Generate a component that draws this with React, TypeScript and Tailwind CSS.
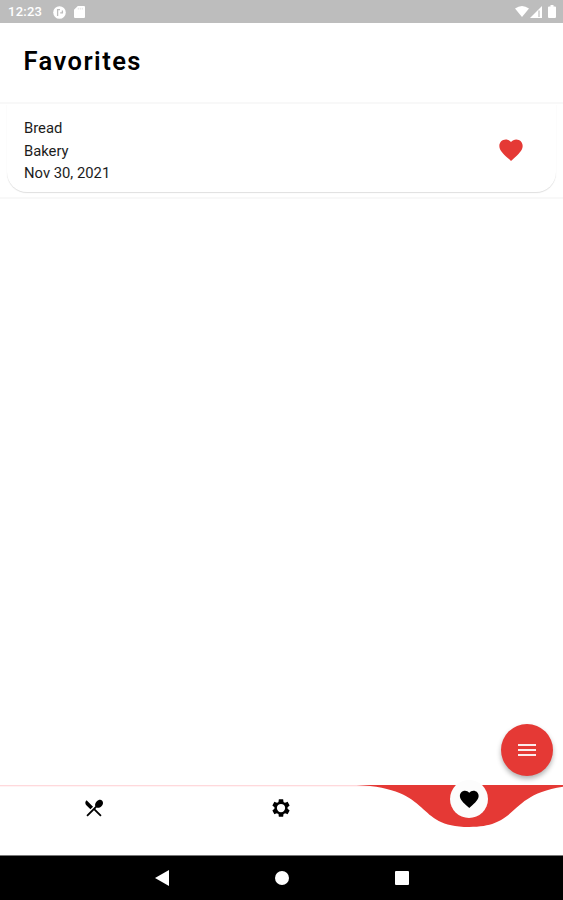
import { MdFavorite, MdMenu, MdRestaurantMenu } from "react-icons/md"

function StatusBar() {
  return (
    <div className="flex h-[23px] shrink-0 items-center justify-between bg-[#bdbdbd] pl-2 pr-[7px] text-white">
      <div className="flex items-center">
        <span className="w-[45px] text-[13px] leading-[23px] font-medium tracking-[0.25px]">12:23</span>
        <svg className="mt-px h-[13px] w-[13px]" viewBox="0 0 13 13">
          <circle cx="6.5" cy="6.5" r="6.3" fill="#fff" />
          <path d="M4.6 10V3.6H7M7.2 6.8H9.4V4.6" fill="none" stroke="#bdbdbd" strokeWidth="1.3" />
        </svg>
        <svg className="mt-px ml-[8px] h-3 w-[11px]" viewBox="0 0 11 12">
          <path d="M3.8 0H10Q11 0 11 1V11Q11 12 10 12H1Q0 12 0 11V3.8Z" fill="#fff" />
          <path d="M4.3 1.8V3.6M6.3 1.8V3.6M8.3 1.8V3.6" stroke="#dedede" strokeWidth="0.8" />
        </svg>
      </div>
      <div className="flex items-center">
        <svg className="h-[11px] w-[14px]" viewBox="0 0 14 11">
          <path d="M0 2.6Q7-2.6 14 2.6L7 11Z" fill="#fff" />
        </svg>
        <svg className="ml-px h-3 w-[12px]" viewBox="0 0 12 12">
          <path d="M0 12L12 0V12Z" fill="#fff" />
          <path d="M9 4.5V11" stroke="#bdbdbd" strokeWidth="1.2" />
        </svg>
        <svg className="ml-[6px] h-[13px] w-2" viewBox="0 0 8 13">
          <path d="M2.5 0H5.5V1.5H7Q8 1.5 8 2.5V12Q8 13 7 13H1Q0 13 0 12V2.5Q0 1.5 1 1.5H2.5Z" fill="#fff" />
        </svg>
      </div>
    </div>
  )
}

function FavoriteCard() {
  return (
    <div className="h-[97px] shrink-0 border-y-2 border-[#f8f8f8] px-[7px] pb-[5px]">
      <div className="flex h-[88px] items-center justify-between rounded-b-[20px] bg-white pr-[31px] pl-[17px] shadow-[0_1px_1px_rgba(0,0,0,0.13)]">
        <div className="pt-[6px] text-[14.8px] leading-[22.5px] text-[#1c1c1c]">
          <p>Bread</p>
          <p>Bakery</p>
          <p>Nov 30, 2021</p>
        </div>
        <MdFavorite className="mt-[4px] text-[28px] text-[#e53935]" />
      </div>
    </div>
  )
}

function GearIcon() {
  return (
    <svg className="mt-[12px] h-[22px] w-[22px]" viewBox="0 0 24 24">
      <path
        d="M19.14 12.94c.04-.3.06-.61.06-.94 0-.32-.02-.64-.07-.94l2.03-1.58c.18-.14.23-.41.12-.61l-1.92-3.32c-.12-.22-.37-.29-.59-.22l-2.39.96c-.5-.38-1.03-.7-1.62-.94l-.36-2.54c-.04-.24-.24-.41-.48-.41h-3.84c-.24 0-.43.17-.47.41l-.36 2.54c-.59.24-1.13.57-1.62.94l-2.39-.96c-.22-.08-.47 0-.59.22L2.74 8.87c-.12.21-.08.47.12.61l2.03 1.58c-.05.3-.09.63-.09.94s.02.64.07.94l-2.03 1.58c-.18.14-.23.41-.12.61l1.92 3.32c.12.22.37.29.59.22l2.39-.96c.5.38 1.03.7 1.62.94l.36 2.54c.05.24.24.41.48.41h3.84c.24 0 .44-.17.47-.41l.36-2.54c.59-.24 1.13-.56 1.62-.94l2.39.96c.22.08.47 0 .59-.22l1.92-3.32c.12-.22.07-.47-.12-.61l-2.01-1.58z"
        fill="#000"
      />
      <circle cx="12" cy="12" r="4.5" fill="#fff" />
    </svg>
  )
}

function BottomNav() {
  return (
    <div className="relative h-[70px] shrink-0 bg-white">
      <svg className="absolute inset-0 h-[70px] w-[563px]" viewBox="0 0 563 70">
        <path d="M0 0.5H563" stroke="#ffd9dc" />
        <path d="M0 1.5H563" stroke="#fff3f4" />
        <path
          d="M356.6 0C435.4 3.5 412.9 42 469.2 42C525.4 42 502.9 3.5 581.8 0Z"
          fill="#e53935"
        />
      </svg>
      <div className="relative grid h-full grid-cols-3 justify-items-center text-black">
        <MdRestaurantMenu className="mt-[12px] ml-px text-[22px]" />
        <GearIcon />
        <div className="-mt-[5px] flex h-[38px] w-[38px] items-center justify-center rounded-full bg-[#fcfcfc]">
          <MdFavorite className="text-[22.5px]" />
        </div>
      </div>
    </div>
  )
}

function SystemBar() {
  return (
    <div className="flex h-[45px] shrink-0 items-center justify-between border-t border-[#777] bg-black pr-[154px] pl-[155px]">
      <svg className="h-4 w-[14px]" viewBox="0 0 14 16">
        <path d="M0 8L14 0V16Z" fill="#fff" />
      </svg>
      <div className="h-[14px] w-[14px] rounded-full bg-white" />
      <div className="h-[14px] w-[14px] rounded-[1px] bg-white" />
    </div>
  )
}

export default function App() {
  return (
    <main className="relative flex h-[900px] w-[563px] flex-col overflow-hidden bg-white font-[Roboto,sans-serif]">
      <StatusBar />
      <header className="flex h-[79px] shrink-0 items-center pb-[2px] pl-[23.5px]">
        <h1 className="text-[25.5px] font-semibold tracking-[1.45px] text-black">Favorites</h1>
      </header>
      <FavoriteCard />
      <div className="flex flex-1 items-end justify-end pr-[10px] pb-[9px]">
        <button className="flex h-[52px] w-[52px] items-center justify-center rounded-full bg-[#e53935] text-white shadow-[0_3px_5px_rgba(0,0,0,0.3)]">
          <MdMenu className="text-[24px] text-white/90" />
        </button>
      </div>
      <BottomNav />
      <SystemBar />
    </main>
  )
}
